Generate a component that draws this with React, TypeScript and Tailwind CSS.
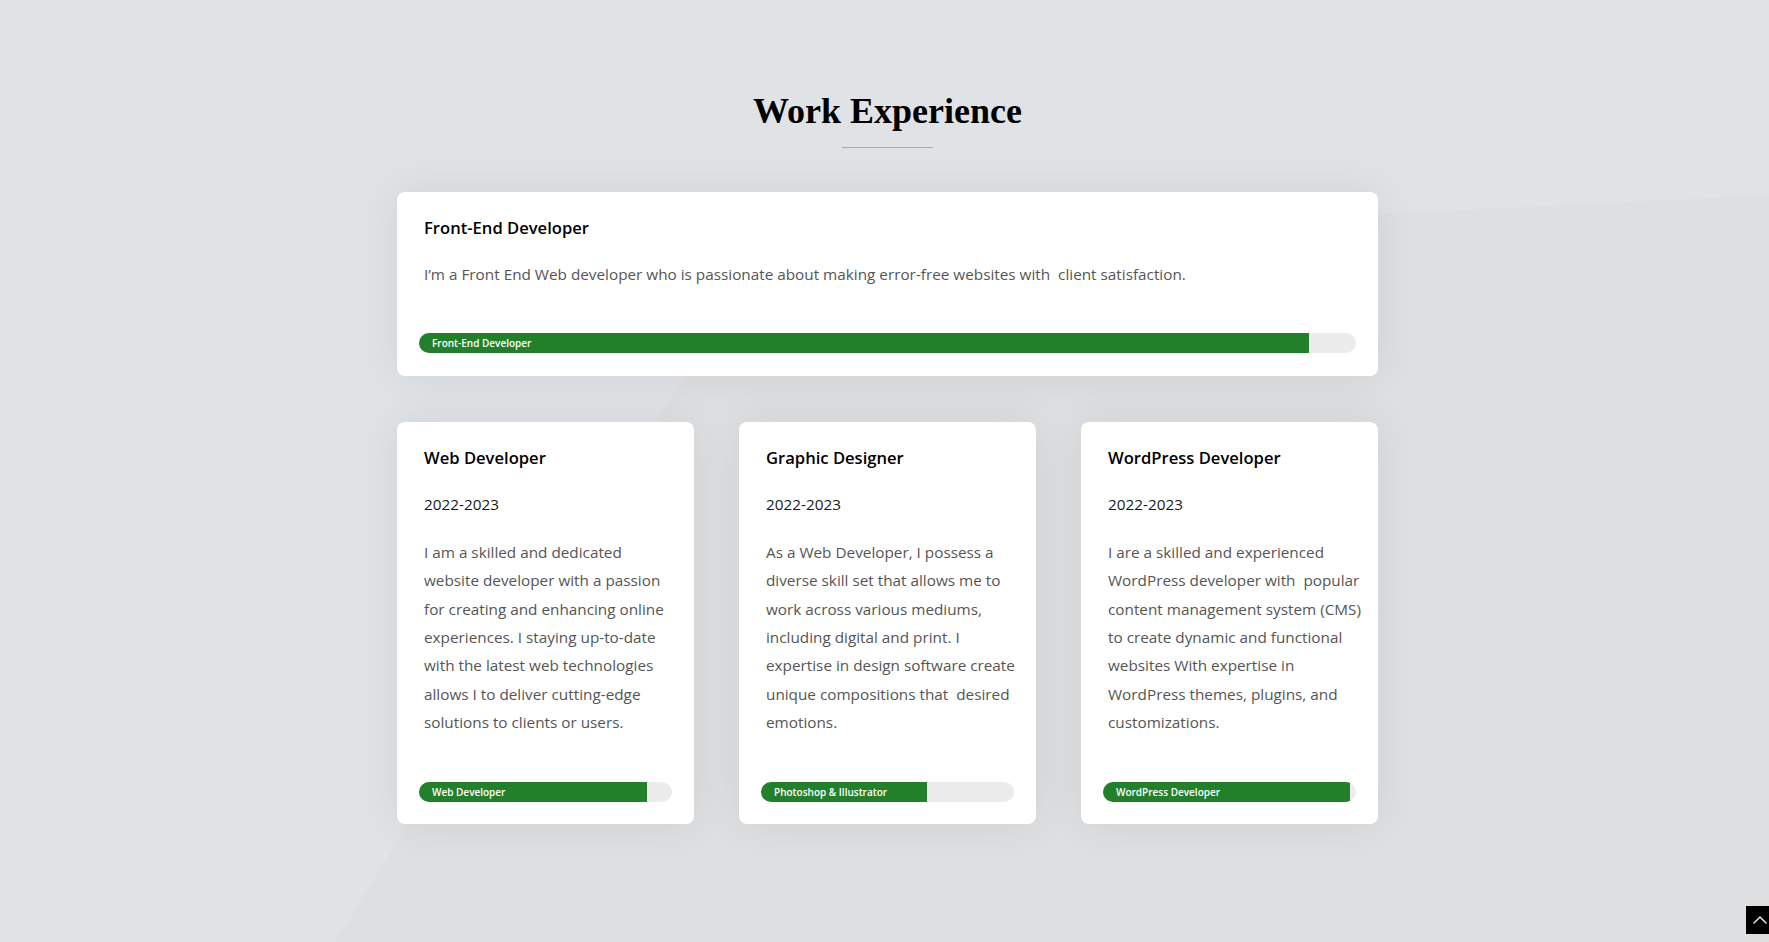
import { ChevronUp } from "lucide-react";

type Job = {
  title: string;
  date?: string;
  text: string;
  skill: string;
  level: number;
};

const featured: Job = {
  title: "Front-End Developer",
  text: "I’m a Front End Web developer who is passionate about making error-free websites with\u00a0 client satisfaction.",
  skill: "Front-End Developer",
  level: 95,
};

const jobs: Job[] = [
  {
    title: "Web Developer",
    date: "2022-2023",
    text: "I am a skilled and dedicated website developer with a passion for creating and enhancing online experiences. I staying up-to-date with the latest web technologies allows I to deliver cutting-edge solutions to clients or users.",
    skill: "Web Developer",
    level: 90,
  },
  {
    title: "Graphic Designer",
    date: "2022-2023",
    text: "As a Web Developer, I possess a diverse skill set that allows me to work across various mediums, including digital and print. I expertise in design software create unique compositions that\u00a0 desired emotions.",
    skill: "Photoshop & Illustrator",
    level: 65.5,
  },
  {
    title: "WordPress Developer",
    date: "2022-2023",
    text: "I are a skilled and experienced WordPress developer with\u00a0 popular content management system (CMS) to create dynamic and functional websites With expertise in WordPress themes, plugins, and customizations.",
    skill: "WordPress Developer",
    level: 97.6,
  },
];

const SkillBar: React.FC<{ label: string; level: number }> = ({ label, level }) => (
  <div className="-ml-[5px] mr-[7px] h-[20px] rounded-full bg-[#ececec] overflow-hidden">
    <div
      className="h-full bg-[#23802a] flex items-center pl-[13px]"
      style={{ width: `${level}%` }}
    >
      <span className="text-[10px] font-semibold text-white whitespace-nowrap leading-[20px]">
        {label}
      </span>
    </div>
  </div>
);

const Card: React.FC<{ job: Job; className?: string }> = ({ job, className }) => (
  <div
    className={`bg-white rounded-[8px] pt-[24px] pb-[22px] pl-[27px] pr-[15px] flex flex-col shadow-[0_0_45px_rgba(0,0,0,0.07)] ${className ?? ""}`}
  >
    <h3 className="text-[16.6px] leading-[24px] font-semibold text-black mb-[20px]">
      {job.title}
    </h3>
    {job.date && (
      <p className="text-[15.3px] leading-[28.4px] text-[#1a1a1a] mb-[19px]">{job.date}</p>
    )}
    <p className="text-[15.3px] leading-[28.4px] text-[#555555] mb-[45px] flex-1">
      {job.text}
    </p>
    <SkillBar label={job.skill} level={job.level} />
  </div>
);

export default function App() {
  return (
    <div
      className="relative h-screen w-full overflow-hidden bg-[#e0e3e6]"
      style={{ fontFamily: '"Open Sans", "Noto Sans", sans-serif' }}
    >
      <svg
        className="absolute inset-0 w-full h-full"
        viewBox="0 0 1769 942"
        preserveAspectRatio="none"
      >
        <polygon points="1769,195 766,244 335,942 1769,942" fill="#dedfe0" />
      </svg>

      <div className="relative flex justify-center pl-[6px]">
        <div className="w-[981px] pt-[89px] flex flex-col items-center">
          <h2
            className="text-[36px] leading-[44px] font-bold text-black"
            style={{ fontFamily: '"Liberation Serif", "DejaVu Serif", serif' }}
          >
            Work Experience
          </h2>
          <div className="mt-[14px] w-[91px] h-px bg-[#a9a9a9]" />

          <Card job={featured} className="w-full mt-[44px] pb-[23px]" />

          <div className="w-full grid grid-cols-3 gap-x-[45px] mt-[46px]">
            {jobs.map((job) => (
              <Card key={job.title} job={job} />
            ))}
          </div>
        </div>
      </div>

      <button className="absolute right-[-5px] bottom-[8px] w-[28px] h-[28px] bg-black flex items-center justify-center">
        <ChevronUp size={24} strokeWidth={1.5} color="#e5e5e5" />
      </button>
    </div>
  );
}
